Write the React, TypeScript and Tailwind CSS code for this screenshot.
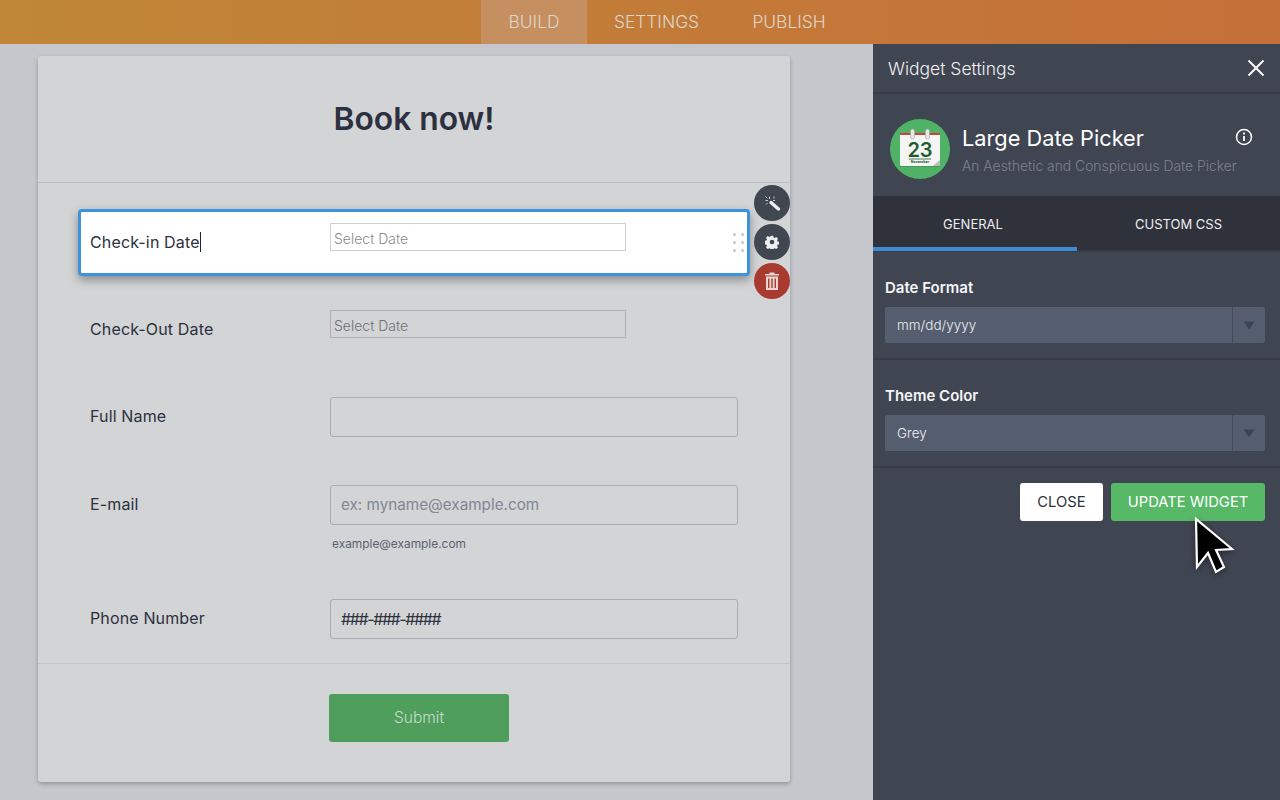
import React from "react";

const font = { fontFamily: "Inter, 'Liberation Sans', sans-serif" };

function Select({ value }: { value: string }) {
  return (
    <div className="flex h-9 w-[380px] rounded-[2px] bg-[#555e6e] text-[13.5px] font-light text-[#eef0f3]">
      <div className="flex flex-1 items-center pl-3">{value}</div>
      <div className="flex w-[33px] items-center justify-center border-l border-[#444a57]">
        <svg width="12" height="9" viewBox="0 0 12 9"><path d="M0.5 0.5H11.5L6 8.5Z" fill="#3e4350" /></svg>
      </div>
    </div>
  );
}

function Input({ children, muted, tight }: { children: React.ReactNode; muted?: boolean; tight?: boolean }) {
  return (
    <div className={`flex h-10 w-[408px] items-center rounded-[3px] border border-[#a9abb6] px-[10px] ${muted ? "text-[15.25px] font-normal text-[#7f8694]" : "text-[16px] text-[#2c3040]"} ${tight ? "tracking-[-1.4px]" : ""}`}>
      {children}
    </div>
  );
}

function Row({ label, active, mt, height, children }: { label: React.ReactNode; active?: boolean; mt: string; height: string; children: React.ReactNode }) {
  return (
    <div className={`${mt} ${height} flex ${active ? "-ml-px w-[672px] rounded-[4px] border-[3px] border-[#3d93dc] bg-white pl-[9px] pt-[11px] shadow-[0_4px_10px_rgba(0,0,0,0.35)]" : "w-[670px] pl-[11px] pt-[13px]"}`}>
      <div className="w-[240px] pt-[9px] text-[16px] font-normal leading-5 tracking-[0.14px] text-[#2c3040]">{label}</div>
      <div>{children}</div>
    </div>
  );
}

function DateBox({ active }: { active?: boolean }) {
  return (
    <div className={`flex h-7 w-[296px] items-center border pl-[3px] pt-[3px] text-[14px] font-light ${active ? "border-[#cfd0d3] text-[#8b8b8b]" : "border-[#aeafb2] text-[#6f7075]"}`}>
      Select Date
    </div>
  );
}

function Calendar() {
  return (
    <svg width="60" height="60" viewBox="0 0 60 60">
      <circle cx="30" cy="30" r="30" fill="#4fb266" />
      <rect x="10" y="16" width="40" height="32" rx="1.5" fill="#2f7f45" opacity="0.45" />
      <rect x="10" y="14" width="40" height="33" rx="1.5" fill="#f5f6f4" />
      <rect x="10" y="14" width="40" height="2" fill="#c9463d" />
      <rect x="20.5" y="10" width="4" height="10" rx="2" fill="#e8e9e6" stroke="#9aa39c" strokeWidth="0.6" />
      <rect x="35.5" y="10" width="4" height="10" rx="2" fill="#e8e9e6" stroke="#9aa39c" strokeWidth="0.6" />
      <text x="30" y="38" textAnchor="middle" fontSize="20" fontWeight="600" fill="#1f5c34" fontFamily="Inter, sans-serif">23</text>
      <rect x="19" y="39.6" width="22" height="0.8" fill="#1f5c34" />
      <text x="30" y="44" textAnchor="middle" fontSize="3.6" fontWeight="700" fill="#1f5c34" fontFamily="Inter, sans-serif">November</text>
      <path d="M50 41L43 47H49Q50 47 50 46Z" fill="#b9bcb8" />
    </svg>
  );
}

export default function App() {
  return (
    <div style={font} className="flex h-[800px] w-[1280px] flex-col overflow-hidden">
      <header className="flex h-11 items-stretch bg-gradient-to-r from-[#c08737] to-[#c56f39] pl-[481px] text-[17.4px] font-light text-[#dfd5ca]">
        <div className="flex w-[106px] items-center justify-center bg-[#c58f60]">BUILD</div>
        <div className="flex w-[139px] items-center justify-center">SETTINGS</div>
        <div className="flex w-[126px] items-center justify-center">PUBLISH</div>
      </header>

      <div className="flex flex-1">
        <main className="w-[873px] bg-[#c6c7cc] pl-[38px] pt-3">
          <div className="relative h-[726px] w-[752px] rounded-[3px] bg-[#d3d4d6] shadow-[0_2px_4px_rgba(0,0,0,0.25)]">
            <div className="flex h-[127px] items-center justify-center border-b border-[#bdbec3] text-[31.8px] font-semibold text-[#2c3040]">
              Book now!
            </div>

            <div className="flex h-[481px] flex-col border-b border-[#c3c4c9] pl-[41px]">
              <Row active mt="mt-[26px]" height="h-[67px]" label={<span className="inline-block h-5 border-r border-[#1f2333]">Check-in Date</span>}>
                <DateBox active />
              </Row>
              <Row mt="mt-[21px]" height="h-[65px]" label="Check-Out Date">
                <DateBox />
              </Row>
              <Row mt="mt-[22px]" height="h-[65px]" label="Full Name">
                <Input>{""}</Input>
              </Row>
              <Row mt="mt-[23px]" height="h-[92px]" label="E-mail">
                <Input muted>ex: myname@example.com</Input>
                <div className="mt-[11px] pl-[2px] text-[11.9px] leading-4 text-[#5b6072]">example@example.com</div>
              </Row>
              <Row mt="mt-[22px]" height="h-[65px]" label="Phone Number">
                <Input tight>###-###-####</Input>
              </Row>
            </div>

            <div className="pl-[291px] pt-[30px]">
              <div className="flex h-12 w-[180px] items-center justify-center rounded-[3px] bg-[#4f9e5c] text-[15.5px] font-light text-[#c8dccb]">Submit</div>
            </div>

            {/* drag handle */}
            <div className="absolute left-[695px] top-[177px] grid grid-cols-[3px_3px] gap-x-[5px] gap-y-[5px]">
              {[0, 1, 2, 3, 4, 5].map((i) => (
                <span key={i} className="h-[3px] w-[3px] rounded-full bg-[#c3c8d1]" />
              ))}
            </div>

            {/* floating actions */}
            <div className="absolute left-[716px] top-[129px] flex flex-col gap-[3px]">
              <div className="flex h-9 w-9 items-center justify-center rounded-full bg-[#414751]">
                <svg width="20" height="20" viewBox="0 0 20 20" fill="none">
                  <path d="M9 9.500L16.500 16" stroke="#eceef0" strokeWidth="3.400" strokeLinecap="round" />
                  <path d="M7.500 3.500V6M3.500 7.500H6M12 3.500V5.500M3.500 3.500L5.300 5.300M11 7.500H13M4 11.500L5.500 10" stroke="#c9ccd0" strokeWidth="1" />
                </svg>
              </div>
              <div className="flex h-9 w-9 items-center justify-center rounded-full bg-[#414751]">
                <svg width="14" height="14" viewBox="0 0 16 16">
                  <path fill="#eceef0" fillRule="evenodd" d="M6.600 0.800h2.800l.4 2 1.300.6 1.800-1.100 2 2-1.100 1.800.6 1.300 2 .4v2.800l-2 .4-.6 1.300 1.100 1.800-2 2-1.800-1.100-1.300.6-.4 2H6.600l-.4-2-1.300-.6-1.800 1.100-2-2 1.100-1.800-.6-1.300-2-.4V6.600l2-.4.6-1.300-1.100-1.800 2-2 1.800 1.100 1.300-.6zM8 5.300a2.700 2.700 0 1 0 0 5.400 2.700 2.700 0 0 0 0-5.400z" />
                </svg>
              </div>
              <div className="flex h-9 w-9 items-center justify-center rounded-full bg-[#a83a30]">
                <svg width="14" height="18" viewBox="0 0 14 18" fill="#e8d6d3">
                  <path d="M4.500 0.500h5v1.500h4.500v1.500H0V2h4.500z" />
                  <path fillRule="evenodd" d="M1 4.500h12V18H1zM3 6.500v9.500h1.400V6.500zM6.300 6.500v9.500h1.400V6.500zM9.600 6.500v9.500H11V6.500z" />
                </svg>
              </div>
            </div>
          </div>
        </main>

        <aside className="relative w-[407px] bg-[#404552] text-white">
          <div className="flex h-[50px] items-center justify-between border-b-2 border-[#383c47] pl-[15px] pr-[15px] pt-[2px]">
            <span className="text-[17.5px] font-light text-[#f0f1f3]">Widget Settings</span>
            <svg className="-mt-[2px]" width="18" height="18" viewBox="0 0 18 18" stroke="#ffffff" strokeWidth="1.800"><path d="M1.500 1.500L16.500 16.500M16.500 1.500L1.500 16.500" /></svg>
          </div>

          <div className="flex h-[102px] items-start pl-[17px] pt-[25px]">
            <Calendar />
            <div className="ml-3 w-[273px] pt-[4px]">
              <div className="whitespace-nowrap text-[21.75px] font-normal leading-[30px] text-white">Large Date Picker</div>
              <div className="mt-[3px] whitespace-nowrap text-[13.85px] font-light leading-5 text-[#7d8290]">An Aesthetic and Conspicuous Date Picker</div>
            </div>
            <svg className="mt-[9px]" width="18" height="18" viewBox="0 0 18 18" fill="none" stroke="#ffffff" strokeWidth="1.500">
              <circle cx="9" cy="9" r="7.500" />
              <path d="M9 8V13" strokeWidth="1.800" />
              <path d="M9 4.600V6.400" strokeWidth="1.800" />
            </svg>
          </div>

          <div className="flex h-14 border-b-2 border-[#383c47] bg-[#2f323b] text-[13px] font-normal text-[#eceef0]">
            <div className="flex h-[55px] w-[204px] items-center justify-center border-b-4 border-[#3c8bd4] pr-1 pt-[6px]">GENERAL</div>
            <div className="flex flex-1 items-center justify-center pt-[3px]">CUSTOM CSS</div>
          </div>

          <div className="h-[108px] border-b-2 border-[#383c47] pl-3 pt-[27px]">
            <div className="mb-[10px] text-[15px] font-semibold leading-[18px] text-[#f4f5f7]">Date Format</div>
            <Select value="mm/dd/yyyy" />
          </div>
          <div className="h-[108px] border-b-2 border-[#383c47] pl-3 pt-[27px]">
            <div className="mb-[10px] text-[15px] font-semibold leading-[18px] text-[#f4f5f7]">Theme Color</div>
            <Select value="Grey" />
          </div>

          <div className="flex justify-end gap-2 pr-[15px] pt-[15px]">
            <div className="flex h-[38px] w-[83px] items-center justify-center rounded-[3px] bg-white pt-px text-[14.75px] font-normal text-[#2c3040]">CLOSE</div>
            <div className="flex h-[38px] w-[154px] items-center justify-center rounded-[3px] bg-[#57b968] pt-px text-[14.75px] font-normal text-white">UPDATE WIDGET</div>
          </div>

          {/* pointer */}
          <svg className="absolute left-[317px] top-[472px] drop-shadow-[0_2px_3px_rgba(0,0,0,0.4)]" width="50" height="64" viewBox="0 0 50 64">
            <path d="M6 3L7 51L18 37L26 56L34 51L26 34L42 33Z" fill="#000000" stroke="#ffffff" strokeWidth="2.200" strokeLinejoin="miter" />
          </svg>
        </aside>
      </div>
    </div>
  );
}
